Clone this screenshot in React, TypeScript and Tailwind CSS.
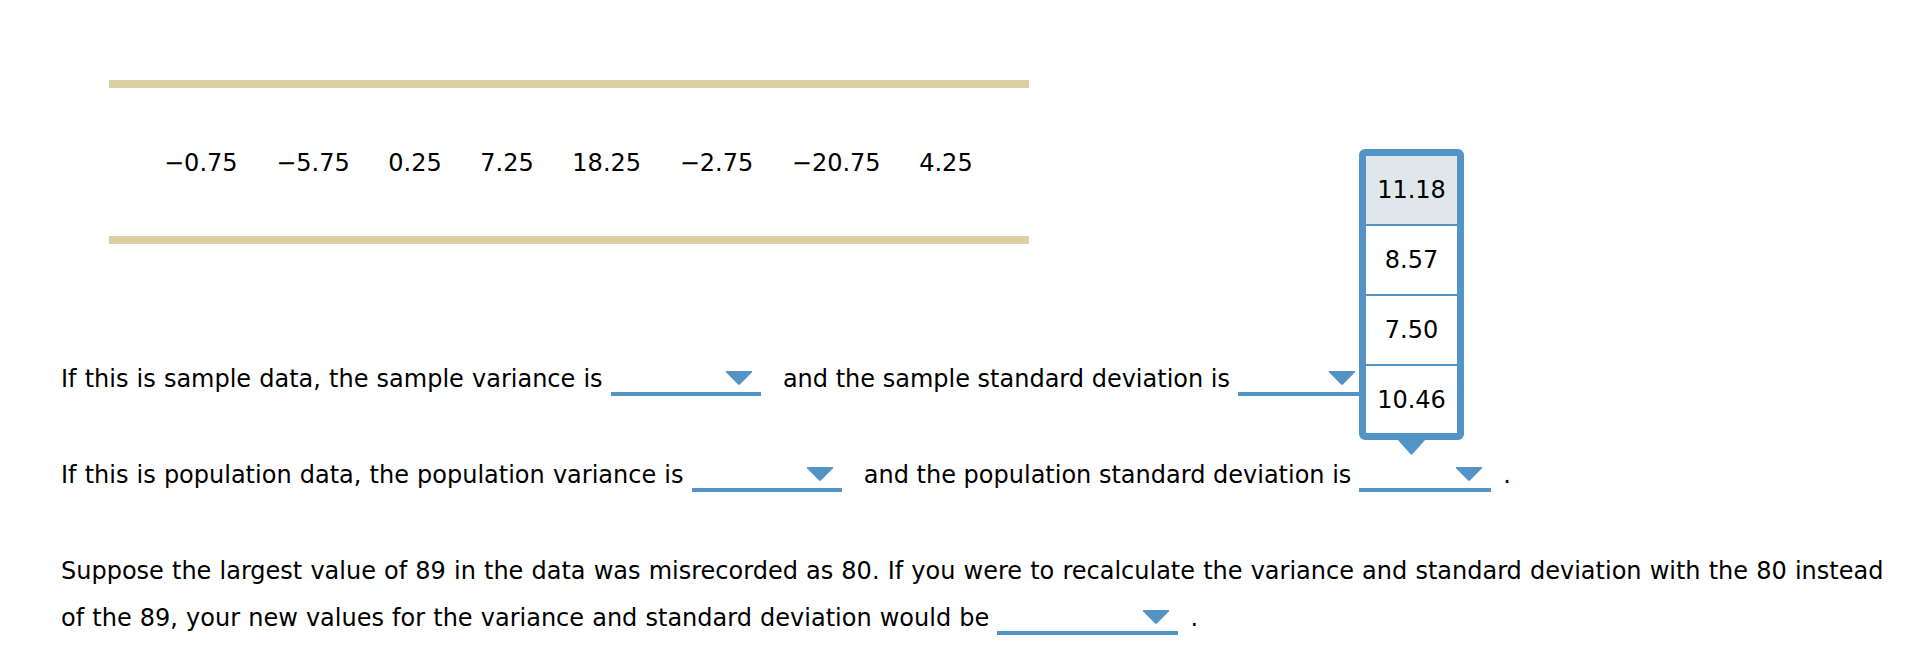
import React from "react";

const BLUE = "#5394c7";

function Arrow() {
  return (
    <svg width="28" height="14" viewBox="0 0 28 14" className="block ml-auto">
      <path d="M1.5 0 H26.5 Q28 0 27 1.2 L15.2 13.2 Q14 14.3 12.8 13.2 L1 1.2 Q0 0 1.5 0 Z" fill={BLUE} />
    </svg>
  );
}

function Dropdown({
  width,
  className = "",
  children,
}: {
  width: string;
  className?: string;
  children?: React.ReactNode;
}) {
  return (
    <span
      className={`relative inline-block h-[25px] pr-[8px] border-b-4 border-[#5394c7] align-[-9px] ${width} ${className}`}
    >
      <Arrow />
      {children}
    </span>
  );
}

const options = ["11.18", "8.57", "7.50", "10.46"];

function Popup() {
  return (
    <div className="absolute left-0 bottom-[33px] flex flex-col items-center z-10 [word-spacing:0px]">
      <div className="w-[105px] border-[7px] border-[#5394c7] rounded-[6px] bg-[#5394c7] flex flex-col gap-[2px]">
        {options.map((o, i) => (
          <div
            key={o}
            className={`flex items-center justify-center leading-none ${
              i === 3 ? "h-[67px]" : "h-[68px]"
            } ${i === 0 ? "bg-[#dfe7ea]" : "bg-white"}`}
          >
            {o}
          </div>
        ))}
      </div>
      <svg width="29" height="16" viewBox="0 0 29 16" className="block -mt-px">
        <path d="M0 0 H29 L15.6 15 Q14.5 16.2 13.4 15 Z" fill={BLUE} />
      </svg>
    </div>
  );
}

const numbers = ["−0.75", "−5.75", "0.25", "7.25", "18.25", "−2.75", "−20.75", "4.25"];

export default function App() {
  return (
    <div className="w-[1932px] h-[666px] bg-white text-black text-[24px] overflow-hidden font-['DejaVu_Sans',Verdana,sans-serif]">
      <div className="pt-[80px] pl-[109px]">
        <div className="w-[920px]">
          <div className="h-[8px] bg-[#dbcfa4]" />
          <div className="h-[148px] pt-[61px] pl-[55px] flex gap-[38.6px] leading-[28px]">
            {numbers.map((n) => (
              <span key={n}>{n}</span>
            ))}
          </div>
          <div className="h-[8px] bg-[#dbcfa4]" />
        </div>
      </div>
      <div className="pl-[61px] leading-[47px] [word-spacing:0.5px]">
        <p className="mt-[112px] whitespace-nowrap">
          If this is sample data, the sample variance is{" "}
          <Dropdown width="w-[150px]" className="mr-[14px]" />{" "}
          <span className="[word-spacing:0px]">and the sample standard deviation is </span>
          <Dropdown width="w-[126px]" />
        </p>
        <p className="mt-[49px] whitespace-nowrap">
          If this is population data, the population variance is{" "}
          <Dropdown width="w-[150px]" className="mr-[14px]" />{" "}
          <span className="[word-spacing:0px]">and the population standard deviation is </span>
          <Dropdown width="w-[132px]" className="mr-[4px]">
            <Popup />
          </Dropdown>{" "}
          .
        </p>
        <p className="mt-[49px] whitespace-nowrap">
          Suppose the largest value of 89 in the data was misrecorded as 80. If you were to recalculate the
          variance and standard deviation with the 80 instead
          <br />
          of the 89, your new values for the variance and standard deviation would be{" "}
          <Dropdown width="w-[181px]" className="mr-[4px]" /> .
        </p>
      </div>
    </div>
  );
}
